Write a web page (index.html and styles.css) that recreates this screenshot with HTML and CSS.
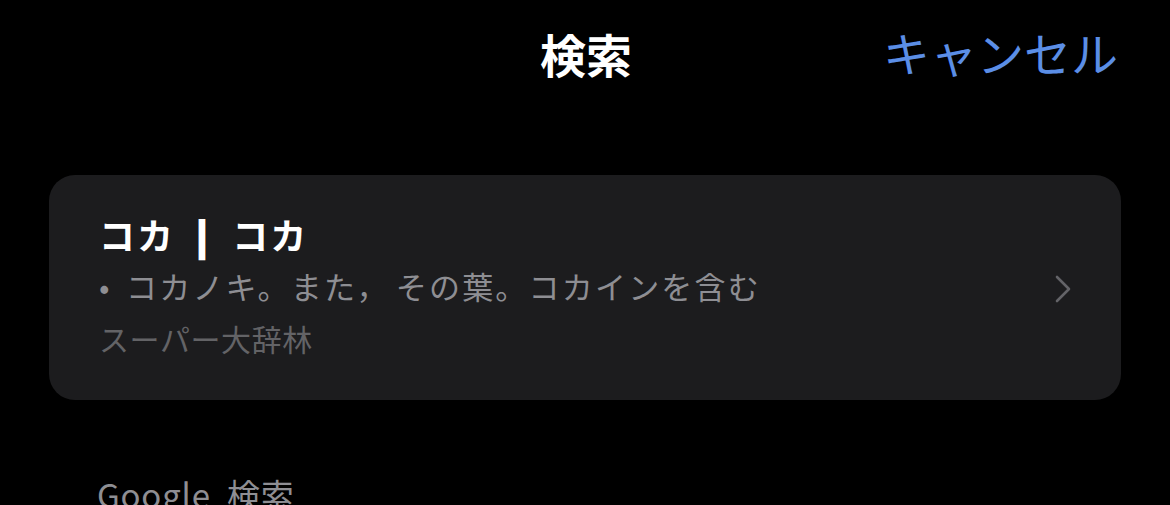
FILE: index.html
```html
<!DOCTYPE html>
<html lang="ja">
<head>
<meta charset="utf-8">
<link rel="stylesheet" href="styles.css">
</head>
<body>
<header class="nav">
  <div class="nav-title">検索</div>
  <div class="nav-cancel">キャンセル</div>
</header>
<main class="content">
  <div class="card">
    <div class="card-text">
      <div class="entry-title">コカ<span class="sep">|</span>コカ</div>
      <div class="entry-def"><span class="bullet">•</span>コカノキ。また，<span class="gap"></span>その葉。コカインを含む</div>
      <div class="entry-src">スーパー大辞林</div>
    </div>
    <svg class="chevron" viewBox="0 0 16 28" width="16" height="28"><path d="M2 2 L14 14 L2 26" fill="none" stroke="#636367" stroke-width="2.6" stroke-linecap="round" stroke-linejoin="round"/></svg>
  </div>
  <div class="section-label">Google 検索</div>
</main>
</body>
</html>
```
FILE: styles.css
```css
html, body {
  margin: 0;
  padding: 0;
  background: #000;
}
body {
  font-family: "Noto Sans CJK JP", "Noto Sans", sans-serif;
  color: #fff;
  overflow: hidden;
  height: 505px;
}
.nav {
  position: relative;
  height: 110px;
  display: flex;
  align-items: center;
  justify-content: center;
}
.nav-title {
  font-size: 46px;
  font-weight: 700;
  margin-top: -4px;
  margin-left: 2px;
}
.nav-cancel {
  position: absolute;
  right: 52px;
  top: 20px;
  font-size: 47px;
  color: #5b8ee6;
  line-height: 64px;
}
.content {
  padding: 65px 49px 0 49px;
}
.card {
  background: #1c1c1e;
  border-radius: 26px;
  height: 225px;
  box-sizing: border-box;
  padding: 0 50px;
  display: flex;
  align-items: center;
}
.card-text {
  flex: 1;
  align-self: flex-start;
  padding-top: 33px;
}
.entry-title {
  font-size: 36px;
  font-weight: 700;
  line-height: 52px;
  letter-spacing: 2px;
}
.sep {
  display: inline-block;
  font-weight: 900;
  margin: 0 22px 0 22px;
  transform: scaleX(1.6);
}
.entry-def {
  font-size: 31px;
  line-height: 52px;
  color: #8e8e93;
  letter-spacing: 2.2px;
}
.bullet {
  display: inline-block;
  width: 27px;
}
.gap {
  display: inline-block;
  width: 6px;
}
.entry-src {
  font-size: 30px;
  line-height: 52px;
  color: #636366;
  letter-spacing: 0.6px;
}
.chevron {
  margin-top: 2px;
}
.section-label {
  margin: 72px 0 0 48px;
  font-size: 33px;
  color: #8e8e93;
  line-height: 44px;
  word-spacing: 8px;
  letter-spacing: 0.8px;
}
```
